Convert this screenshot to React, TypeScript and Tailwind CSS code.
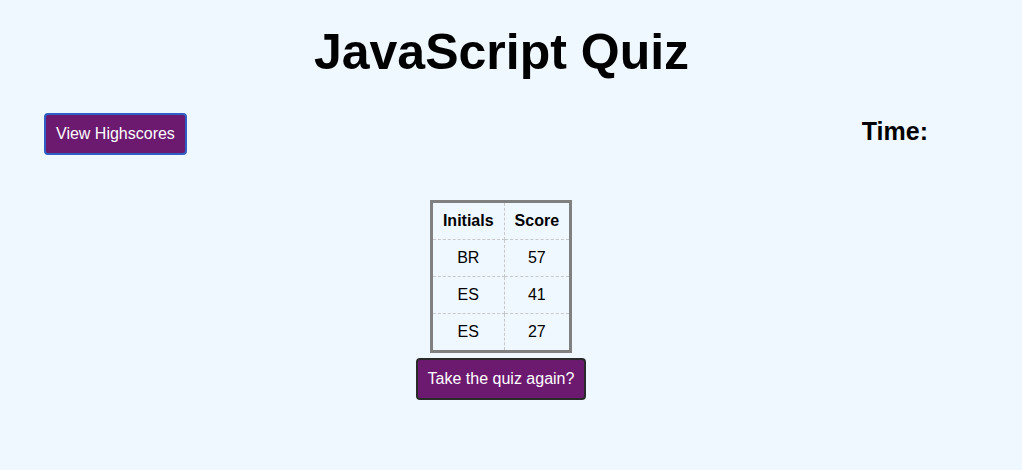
import React from "react";

const rows = [
  ["BR", "57"],
  ["ES", "41"],
  ["ES", "27"],
];

export default function App() {
  return (
    <div
      className="min-h-[470px] w-full bg-[#f0f8ff] text-black"
      style={{ fontFamily: '"Liberation Sans", Arial, sans-serif' }}
    >
      <h1 className="pr-[19px] pt-[23px] text-center text-[50px] font-bold leading-[58px]">JavaScript Quiz</h1>
      <div className="mt-[32px] flex items-start justify-between pl-[44px] pr-[94px]">
        <button className="h-[42px] rounded-[4px] border-2 border-[#2f5fc4] bg-[#6b1a6f] px-[10px] text-[16px] text-white">
          View Highscores
        </button>
        <div className="pt-[4px] text-[25px] font-bold leading-[28px]">Time:</div>
      </div>
      <div className="mt-[45px] flex flex-col items-center pr-[20px]">
        <table className="border-collapse border-[3px] border-solid border-[#808080] text-[16px]">
          <thead>
            <tr>
              <th className="border border-dashed border-[#c8c8c8] px-[10px] py-[9px] leading-[18px]">Initials</th>
              <th className="border border-dashed border-[#c8c8c8] px-[10px] py-[9px] leading-[18px]">Score</th>
            </tr>
          </thead>
          <tbody>
            {rows.map((r, i) => (
              <tr key={i}>
                <td className="border border-dashed border-[#c8c8c8] px-[10px] py-[9px] text-center leading-[18px]">{r[0]}</td>
                <td className="border border-dashed border-[#c8c8c8] px-[10px] py-[9px] text-center leading-[18px]">{r[1]}</td>
              </tr>
            ))}
          </tbody>
        </table>
        <button className="mt-[5px] h-[42px] rounded-[4px] border-2 border-[#2a2a2a] bg-[#6b1a6f] px-[10px] text-[16px] text-white">
          Take the quiz again?
        </button>
      </div>
    </div>
  );
}
